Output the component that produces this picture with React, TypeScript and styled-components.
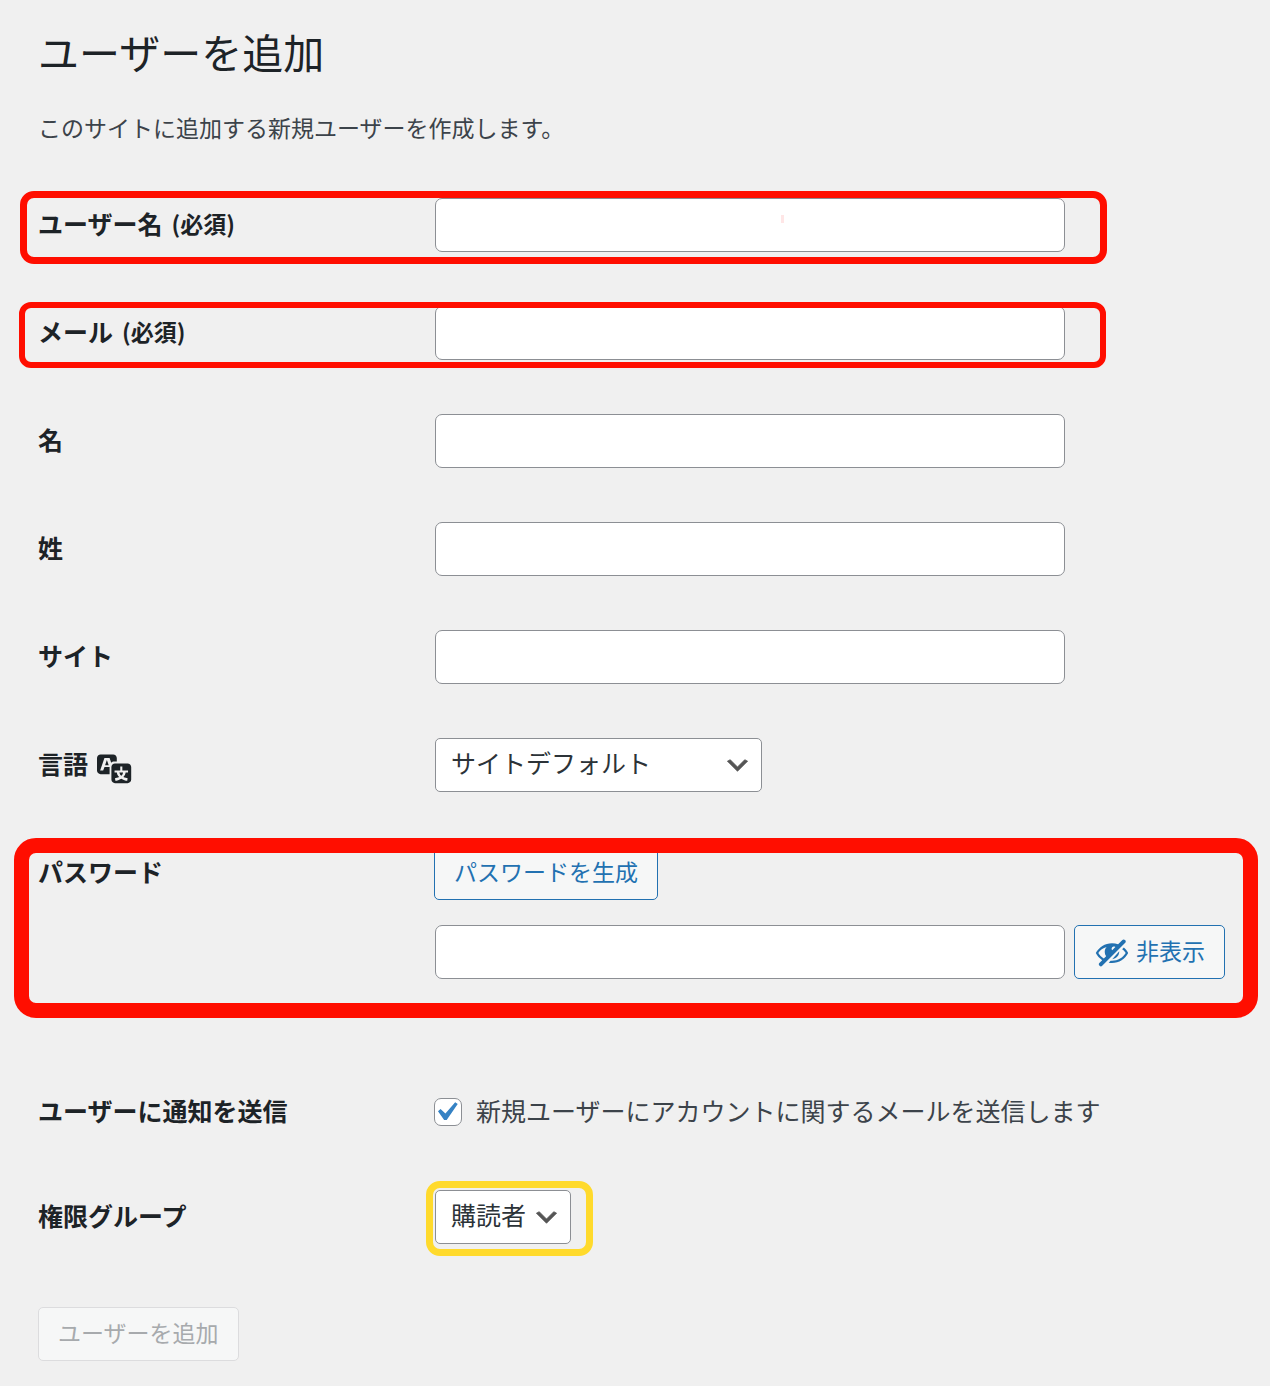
import React, { useState } from "react";
import styled, { createGlobalStyle, css } from "styled-components";

const color = {
  page: "#f0f0f0",
  heading: "#1d2327",
  text: "#3c434a",
  field: "#2c3338",
  border: "#8c8f94",
  blue: "#2271b1",
  surface: "#f6f7f7",
  red: "#ff0e00",
  yellow: "#ffda2c",
};

const GlobalStyle = createGlobalStyle`
  *, *::before, *::after { box-sizing: border-box; }
  body {
    margin: 0;
    background: ${color.page};
    color: ${color.text};
    font-family: "Noto Sans CJK JP", "Noto Sans", sans-serif;
  }
  button, input, select { font-family: inherit; margin: 0; }
`;

const Page = styled.main`
  padding: 21px 12px 25px 38px;
`;

const Title = styled.h1`
  margin: 0;
  font-size: 41px;
  font-weight: 400;
  line-height: 60px;
  color: ${color.heading};
`;

const Intro = styled.p`
  margin: 29px 0 54px;
  font-size: 23px;
  line-height: 34px;
`;

const Row = styled.div<{ $gap?: number }>`
  position: relative;
  display: flex;
  align-items: flex-start;
  width: fit-content;
  max-width: 100%;
  margin-bottom: ${(p) => p.$gap ?? 54}px;

  @media (max-width: 800px) {
    flex-direction: column;
  }
`;

const labelStyle = css`
  display: flex;
  align-items: center;
  flex: 0 0 396px;
  height: 50px;
  font-size: 25px;
  font-weight: 700;
  line-height: 50px;
  color: ${color.heading};
  white-space: pre;

  @media (max-width: 800px) {
    flex-basis: auto;
  }
`;

const Label = styled.label`
  ${labelStyle}
`;

const Caption = styled.span`
  ${labelStyle}
`;

const Required = styled.span`
  margin-left: 9px;
  font-size: 23px;
`;

const Field = styled.div`
  position: relative;
  display: flex;
  flex-direction: column;
  align-items: flex-start;
  gap: 25px;
  min-width: 0;
`;

const Inline = styled.div`
  display: flex;
  gap: 8px;
  max-width: 100%;
`;

const TextInput = styled.input`
  width: 630px;
  min-width: 0;
  max-width: 100%;
  height: 54px;
  margin: 0 1px;
  padding: 0 14px;
  border: 1px solid ${color.border};
  border-radius: 7px;
  background: #fff;
  color: ${color.field};
  font-size: 25px;
`;

const chevron = encodeURIComponent(
  '<svg xmlns="http://www.w3.org/2000/svg" viewBox="0 0 20 20"><path d="M5 6l5 5 5-5 2 1-7 7-7-7 2-1z" fill="#555" stroke="#555" stroke-width=".5"/></svg>'
);

const Select = styled.select<{ $width: number }>`
  appearance: none;
  width: ${(p) => p.$width}px;
  height: 54px;
  margin: 0 1px;
  padding: 0 40px 6px 15px;
  border: 1px solid ${color.border};
  border-radius: 5px;
  background: #fff url("data:image/svg+xml,${chevron}") no-repeat right 9px top 12px / 29px 29px;
  color: ${color.field};
  font-size: 25px;
`;

const Button = styled.button`
  display: flex;
  align-items: center;
  justify-content: center;
  flex: none;
  gap: 6px;
  height: 54px;
  padding: 0 19px 4px;
  border: 1px solid ${color.blue};
  border-radius: 5px;
  background: ${color.surface};
  color: ${color.blue};
  font-size: 23px;
  line-height: 34px;
  cursor: pointer;

  &:disabled {
    border-color: #dcdcde;
    color: #a7aaad;
    cursor: default;
  }
`;

const check = encodeURIComponent(
  '<svg xmlns="http://www.w3.org/2000/svg" viewBox="0 0 20 20"><path d="M14.83 4.89l1.34.94-5.81 8.38H9.02L5.78 9.67l1.34-1.25 2.57 2.4z" fill="#3582c4"/></svg>'
);

const Checkbox = styled.input`
  appearance: none;
  flex: none;
  width: 28px;
  height: 28px;
  border: 1px solid ${color.border};
  border-radius: 7px;
  background: #fff;

  &:checked {
    background: #fff url("data:image/svg+xml,${check}") no-repeat -8px -6px / 38px 38px;
  }
`;

const CheckLabel = styled.label`
  display: flex;
  align-items: center;
  gap: 14px;
  min-height: 54px;
  font-size: 25px;
  line-height: 36px;
`;

const CheckText = styled.span`
  padding-bottom: 4px;
`;

const Icon = styled.svg`
  flex: none;
  width: 36px;
  height: 36px;
  margin-top: 4px;
  fill: currentColor;
`;

const TranslationIcon = styled(Icon)`
  margin: 8px 0 0 9px;
`;

const Marker = styled.span<{
  $inset: string;
  $color: string;
  $line: number;
  $radius: number;
}>`
  position: absolute;
  inset: ${(p) => p.$inset};
  border: ${(p) => p.$line}px solid ${(p) => p.$color};
  border-radius: ${(p) => p.$radius}px;
  pointer-events: none;
`;

const Speck = styled.span`
  position: absolute;
  top: 17px;
  left: 347px;
  width: 3px;
  height: 8px;
  background: #ffe6e6;
`;

const HiddenIcon = () => (
  <Icon viewBox="0 0 20 20" aria-hidden="true">
    <path d="M17.2 3.3l.16.17c.39.39.39 1.02 0 1.41L4.55 17.7c-.39.39-1.03.39-1.41 0l-.17-.17c-.39-.39-.39-1.02 0-1.41l1.59-1.6c-1.57-1-2.76-2.3-3.56-3.93.81-1.65 2.03-2.98 3.64-3.99S8.04 5.09 10 5.09c1.2 0 2.33.21 3.4.6l2.38-2.39c.39-.39 1.03-.39 1.42 0zm-7.09 4.01c-.23.25-.34.54-.34.88 0 .31.12.58.31.81l1.8-1.79c-.13-.12-.28-.21-.45-.26-.11-.01-.28-.03-.49-.04-.33.03-.6.16-.83.4zM2.4 10.59c.69 1.23 1.71 2.25 3.05 3.05l1.28-1.28c-.51-.69-.77-1.47-.77-2.36 0-1.06.36-1.98 1.09-2.76-1.04.27-1.96.7-2.76 1.26-.8.58-1.43 1.27-1.89 2.09zM15.62 8.46l.96-1.02c1.02.83 1.83 1.89 2.42 3.15-.81 1.65-2.03 2.98-3.64 3.99s-3.4 1.51-5.36 1.51c-.63 0-1.24-.07-1.83-.18l1.07-1.07c.25.02.5.05.76.05 1.63 0 3.13-.4 4.5-1.21s2.4-1.84 3.1-3.1c-.46-.82-1.09-1.51-1.98-2.12zM14.02 9.6c.05 2.3-1.55 4.2-3.9 4.36z" />
  </Icon>
);

type TextRowProps = {
  id: string;
  label: string;
  type?: string;
  required?: boolean;
  marker?: React.ReactNode;
  speck?: boolean;
};

const TextRow = ({ id, label, type = "text", required, marker, speck }: TextRowProps) => (
  <Row>
    <Label htmlFor={id}>
      {label}
      {required && <Required>(必須)</Required>}
    </Label>
    <Field>
      <TextInput id={id} name={id} type={type} />
      {speck && <Speck />}
    </Field>
    {marker}
  </Row>
);

export default function App() {
  const [notify, setNotify] = useState(true);

  return (
    <>
      <GlobalStyle />
      <Page>
        <Title>ユーザーを追加</Title>
        <Intro>このサイトに追加する新規ユーザーを作成します。</Intro>
        <form onSubmit={(e) => e.preventDefault()}>
          <TextRow
            id="user_login"
            label="ユーザー名"
            required
            speck
            marker={<Marker $inset="-7px -41px -12px -18px" $color={color.red} $line={7} $radius={14} />}
          />
          <TextRow
            id="email"
            label="メール"
            type="email"
            required
            marker={<Marker $inset="-4px -40px -8px -19px" $color={color.red} $line={6} $radius={12} />}
          />
          <TextRow id="first_name" label="名" />
          <TextRow id="last_name" label="姓" />
          <TextRow id="url" label="サイト" type="url" />

          <Row>
            <Label htmlFor="locale">
              言語
              <TranslationIcon viewBox="0 0 20 20" aria-hidden="true">
                <path d="M11 7H9.49c-.63 0-1.25.3-1.59.7L7 5H4.13l-2.39 7h1.69l.74-2H7v4H2c-1.1 0-2-.9-2-2V5c0-1.1.9-2 2-2h7c1.1 0 2 .9 2 2v2zM6.51 9H4.49l1-2.93zM10 8h7c1.1 0 2 .9 2 2v7c0 1.1-.9 2-2 2h-7c-1.1 0-2-.9-2-2v-7c0-1.1.9-2 2-2zm7.25 5v-1.08h-3.17V9.75h-1.16v2.17H9.75V13h1.28c.11.85.56 1.85 1.28 2.62-.87.36-1.89.62-2.31.62-.01.02.22.97.2 1.46.84 0 2.21-.5 3.28-1.15 1.09.65 2.48 1.15 3.34 1.15-.02-.49.2-1.44.2-1.46-.43 0-1.49-.27-2.38-.63.7-.77 1.14-1.77 1.25-2.61h1.36zm-3.81 1.93c-.5-.46-.85-1.13-1.01-1.93h2.09c-.17.8-.51 1.47-1 1.93l-.04.03s-.03-.02-.04-.03z" />
              </TranslationIcon>
            </Label>
            <Field>
              <Select id="locale" $width={327} defaultValue="site-default">
                <option value="site-default">サイトデフォルト</option>
              </Select>
            </Field>
          </Row>

          <Row $gap={106}>
            <Label htmlFor="password">パスワード</Label>
            <Field>
              <Button type="button">パスワードを生成</Button>
              <Inline>
                <TextInput id="password" name="password" type="text" autoComplete="off" />
                <Button type="button">
                  <HiddenIcon />
                  非表示
                </Button>
              </Inline>
            </Field>
            <Marker $inset="-8px -33px -39px -24px" $color={color.red} $line={15} $radius={22} />
          </Row>

          <Row $gap={51}>
            <Caption>ユーザーに通知を送信</Caption>
            <Field>
              <CheckLabel>
                <Checkbox type="checkbox" checked={notify} onChange={(e) => setNotify(e.target.checked)} />
                <CheckText>新規ユーザーにアカウントに関するメールを送信します</CheckText>
              </CheckLabel>
            </Field>
          </Row>

          <Row $gap={63}>
            <Label htmlFor="role">権限グループ</Label>
            <Field>
              <Select id="role" $width={136} defaultValue="subscriber">
                <option value="subscriber">購読者</option>
              </Select>
              <Marker $inset="-9px -21px -12px -8px" $color={color.yellow} $line={7} $radius={14} />
            </Field>
          </Row>

          <Button type="submit" disabled>
            ユーザーを追加
          </Button>
        </form>
      </Page>
    </>
  );
}
